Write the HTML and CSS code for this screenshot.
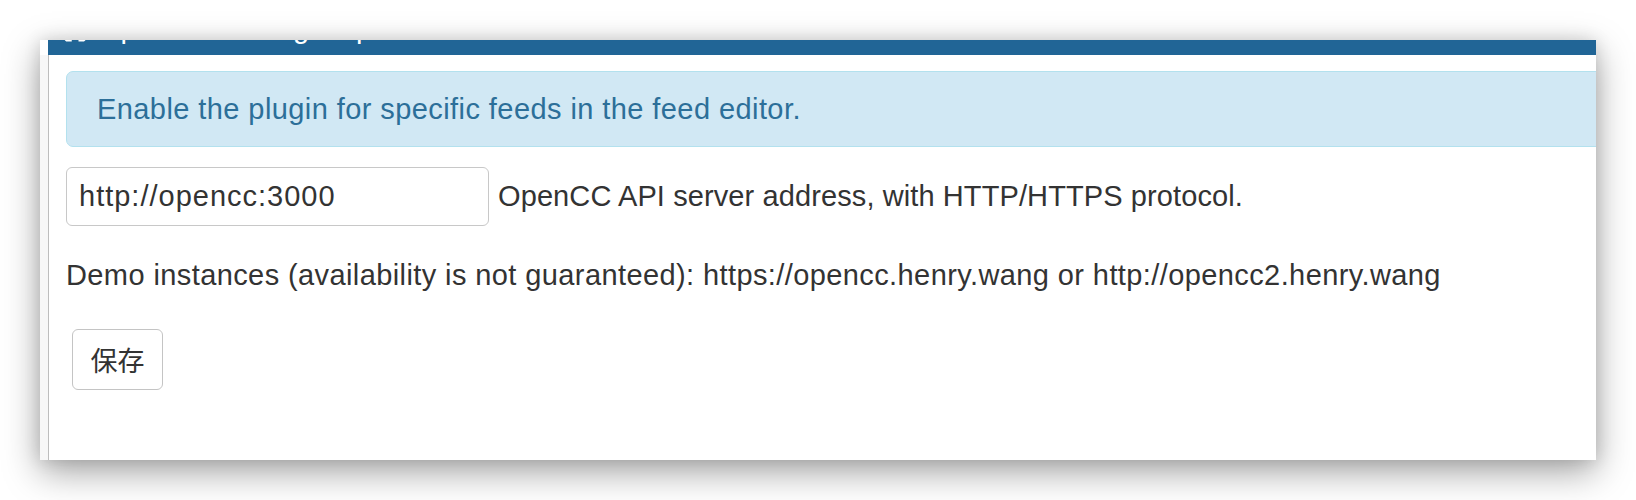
FILE: index.html
```html
<!DOCTYPE html>
<html lang="en">
<head>
<meta charset="utf-8">
<title>OpenCC settings</title>
<link rel="stylesheet" href="styles.css">
</head>
<body>
<div class="window">
  <div class="titlebar">
    <div class="title">
      <svg class="title-icon" viewBox="0 0 24 24" width="30" height="30"><path fill="#fff" d="M20.5 11H19V7c0-1.1-.9-2-2-2h-4V3.5C13 2.12 11.88 1 10.5 1S8 2.12 8 3.5V5H4c-1.1 0-1.99.9-1.99 2v3.8H3.5c1.49 0 2.7 1.21 2.7 2.7s-1.21 2.7-2.7 2.7H2V20c0 1.1.9 2 2 2h3.8v-1.5c0-1.49 1.21-2.7 2.7-2.7 1.49 0 2.7 1.21 2.7 2.7V22H17c1.1 0 2-.9 2-2v-4h1.5c1.38 0 2.5-1.12 2.5-2.5S21.88 11 20.5 11z"/></svg>
      <span>OpenCC Settings: opencc</span>
    </div>
  </div>
  <div class="body">
    <div class="gutter"></div>
    <div class="content">
      <div class="alert">Enable the plugin for specific feeds in the feed editor.</div>
      <div class="field-row">
        <input class="text-input" type="text" value="http://opencc:3000">
        <span class="field-help">OpenCC API server address, with HTTP/HTTPS protocol.</span>
      </div>
      <p class="demo">Demo instances (availability is not guaranteed): https://opencc.henry.wang or http://opencc2.henry.wang</p>
      <button class="save-btn" type="button">保存</button>
    </div>
  </div>
</div>
</body>
</html>
```

FILE: styles.css
```css
html {
  margin: 0;
  padding: 0;
  min-height: 100%;
  background: #ffffff;
}

body {
  margin: 0;
  min-height: 500px;
  box-sizing: border-box;
  padding: 40px 0 0 40px;
  font-family: "Liberation Sans", "Noto Sans CJK SC", sans-serif;
  color: #333333;
  background: #ffffff;
}

.window {
  width: 1556px;
  height: 420px;
  overflow: hidden;
  display: flex;
  flex-direction: column;
  background: #ffffff;
  box-shadow: 0 12px 34px rgba(0, 0, 0, 0.36), 0 0 16px rgba(0, 0, 0, 0.12);
}

.titlebar {
  margin-left: 8px;
  height: 15px;
  flex: 0 0 15px;
  background: #216596;
  overflow: hidden;
}

.title {
  display: flex;
  align-items: flex-end;
  gap: 6px;
  margin-top: -30px;
  padding-left: 14px;
  height: 33px;
  color: #ffffff;
  font-size: 29px;
  line-height: 29px;
}

.title-icon {
  flex: 0 0 auto;
  margin-bottom: -1px;
}

.body {
  flex: 1;
  display: flex;
  background: #ffffff;
}

.gutter {
  width: 8px;
  flex: 0 0 8px;
  background: #f7f7f7;
  border-right: 1px solid #bdbdbd;
}

.content {
  flex: 1;
  min-width: 0;
  padding: 16px 0 0 17px;
  font-size: 29px;
}

.alert {
  box-sizing: border-box;
  height: 76px;
  margin-right: -60px;
  padding: 0 30px;
  display: flex;
  align-items: center;
  background: #d1e8f4;
  border: 1px solid #b3e1ee;
  border-radius: 7px;
  color: #2c6f99;
  font-size: 29px;
  letter-spacing: 0.42px;
}

.field-row {
  display: flex;
  align-items: center;
  margin-top: 20px;
}

.text-input {
  box-sizing: border-box;
  width: 423px;
  height: 59px;
  padding: 0 12px;
  border: 1px solid #c8c8c8;
  border-radius: 6px;
  background: #ffffff;
  color: #333333;
  font-family: "Liberation Sans", sans-serif;
  font-size: 29px;
  letter-spacing: 1px;
  outline: none;
}

.field-help {
  margin-left: 9px;
  white-space: nowrap;
  letter-spacing: 0.1px;
}

.demo {
  margin: 29px 0 0 0;
  line-height: 40px;
  white-space: nowrap;
  letter-spacing: 0.4px;
}

.save-btn {
  box-sizing: border-box;
  display: block;
  width: 91px;
  height: 61px;
  margin: 34px 0 0 6px;
  padding: 0;
  background: #ffffff;
  border: 1px solid #c4c4c4;
  border-radius: 6px;
  color: #333333;
  font-family: "Noto Sans CJK SC", sans-serif;
  font-size: 27px;
  line-height: 1;
}
```
